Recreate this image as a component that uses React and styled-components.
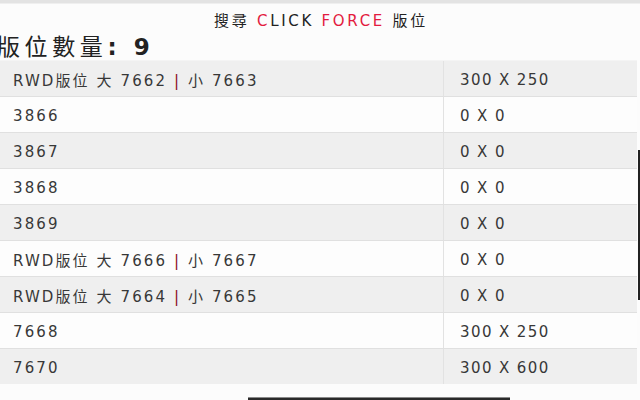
import React from "react";
import styled, { createGlobalStyle } from "styled-components";

const Global = createGlobalStyle`
  html, body { margin: 0; padding: 0; background: #fcfcfc; overflow: hidden; }
  body { font-family: "DejaVu Sans", "Noto Sans CJK TC", sans-serif; color: #333; }
`;

const Page = styled.div`
  position: relative;
  width: 640px;
  height: 400px;
  overflow: hidden;
  background: #fcfcfc;
  display: flex;
  flex-direction: column;
`;

const TopBar = styled.div`
  height: 3px;
  background: #e3e3e3;
  border-bottom: 1px solid #efefef;
  flex: none;
`;

const Title = styled.div`
  height: 30px;
  display: flex;
  align-items: center;
  justify-content: center;
  font-size: 15px;
  letter-spacing: 2.7px;
  color: #222;
  padding-left: 2px;
`;

const Red = styled.span`
  color: #e31b3f;
`;

const Count = styled.h1`
  margin: 0 0 0 -3px;
  height: 26px;
  padding-bottom: 4px;
  box-sizing: border-box;
  display: flex;
  align-items: center;
  font-weight: normal;
  font-size: 23px;
  letter-spacing: 4.6px;
  color: #222;
  white-space: nowrap;
`;

const Strong = styled.b`
  font-weight: bold;
`;

const Table = styled.div`
  width: 637px;
  display: flex;
  flex-direction: column;
`;

const Row = styled.div`
  display: grid;
  grid-template-columns: 443px 1fr;
  height: 36px;
  background: ${(p) => (p.$shade ? "#efefef" : "#fdfdfd")};
  border-top: 1px solid ${(p) => (p.$first ? "#f4f4f4" : "#e0e0e0")};
  box-sizing: border-box;
  font-size: 15px;
  color: #383838;
`;

const Cell = styled.div`
  display: flex;
  align-items: center;
  padding-top: 2px;
  padding-left: ${(p) => (p.$size ? "16px" : "13px")};
  border-left: ${(p) => (p.$size ? "1px solid #e2e2e2" : "none")};
  letter-spacing: ${(p) => (p.$size ? "1.4px" : "2.1px")};
  white-space: pre;
`;

const Pipe = styled.span`
  color: #8a0a1a;
`;

const VThumb = styled.div`
  position: absolute;
  right: 0;
  top: 150px;
  width: 2px;
  height: 150px;
  background: #222;
`;

const HThumb = styled.div`
  position: absolute;
  left: 248px;
  bottom: 0;
  width: 262px;
  height: 3px;
  background: #2a2a2a;
  border-top: 1px solid #8a8a8a;
  box-sizing: border-box;
`;

const rows = [
  { name: ["RWD版位 大 7662 ", " 小 7663"], size: "300 X 250" },
  { name: "3866", size: "0 X 0" },
  { name: "3867", size: "0 X 0" },
  { name: "3868", size: "0 X 0" },
  { name: "3869", size: "0 X 0" },
  { name: ["RWD版位 大 7666 ", " 小 7667"], size: "0 X 0" },
  { name: ["RWD版位 大 7664 ", " 小 7665"], size: "0 X 0" },
  { name: "7668", size: "300 X 250" },
  { name: "7670", size: "300 X 600" },
];

export default function App() {
  return (
    <>
      <Global />
      <Page>
        <TopBar />
        <Title>
          <span>
            搜尋 <Red>C</Red>LICK <Red>FORCE</Red> 版位
          </span>
        </Title>
        <Count>
          <span>
            版位數量<Strong>: 9</Strong>
          </span>
        </Count>
        <Table>
          {rows.map((r, i) => (
            <Row key={i} $shade={i % 2 === 0} $first={i === 0}>
              <Cell>
                <span>
                  {Array.isArray(r.name) ? (
                    <>
                      {r.name[0]}
                      <Pipe>|</Pipe>
                      {r.name[1]}
                    </>
                  ) : (
                    r.name
                  )}
                </span>
              </Cell>
              <Cell $size>
                <span>{r.size}</span>
              </Cell>
            </Row>
          ))}
        </Table>
        <VThumb />
        <HThumb />
      </Page>
    </>
  );
}
